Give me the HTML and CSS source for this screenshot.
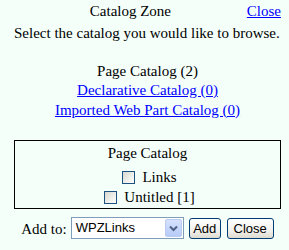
FILE: index.html
```html
<!DOCTYPE html>
<html lang="en">
<head>
    <meta charset="UTF-8">
    <title>Catalog Zone</title>
    <link rel="stylesheet" href="styles.css">
</head>
<body>
    <div class="zone">
        <div class="zone-header">
            <span class="zone-title">Catalog Zone</span>
            <a href="#" class="zone-close">Close</a>
        </div>
        <div class="instructions">Select the catalog you would like to browse.</div>

        <div class="catalogs">
            <div>Page Catalog (2)</div>
            <a href="#">Declarative Catalog (0)</a>
            <a href="#">Imported Web Part Catalog (0)</a>
        </div>

        <div class="part-box">
            <div class="part-title">Page Catalog</div>
            <label class="part-row"><span class="check"></span>Links</label>
            <label class="part-row"><span class="check"></span>Untitled [1]</label>
        </div>

        <div class="footer">
            <span class="add-label">Add to:</span>
            <div class="combo">
                <span class="combo-text">WPZLinks</span>
                <span class="combo-btn">
                    <svg width="9" height="7" viewBox="0 0 9 7">
                        <path d="M1 1.5 L4.5 5 L8 1.5" fill="none" stroke="#4d6185" stroke-width="2"/>
                    </svg>
                </span>
            </div>
            <button class="btn btn-add">Add</button>
            <button class="btn btn-close">Close</button>
        </div>
    </div>
</body>
</html>
```

FILE: styles.css
```css
body {
    margin: 0;
    background: #f5fffa;
    font-family: "Liberation Serif", "Times New Roman", serif;
    font-size: 15px;
    line-height: 19.5px;
    color: #000;
}

a {
    color: #0000ff;
}

.zone {
    margin-left: 14px;
    width: 267px;
    padding-top: 1.5px;
    white-space: nowrap;
}

.zone-header {
    display: flex;
}

.zone-title {
    flex: 1;
    text-align: center;
}

.instructions {
    margin-top: 3px;
}

.catalogs {
    margin-top: 18px;
    text-align: center;
}

.catalogs a {
    display: block;
}

.part-box {
    margin-top: 20px;
    border: 1px solid #000;
    padding: 3px 0 1px;
    text-align: center;
    width: 265px;
}

.part-title {
    margin-bottom: 4.5px;
}

.part-row {
    display: flex;
    justify-content: center;
    align-items: center;
    height: 19.5px;
}

.check {
    width: 11px;
    height: 11px;
    margin: 0 7px 0 4px;
    border: 1px solid #1c5180;
    background: linear-gradient(135deg, #d8d8d2, #f4f4f0 70%, #ffffff);
}

.footer {
    margin-top: 8px;
    display: flex;
    justify-content: center;
    align-items: flex-start;
}

.add-label {
    margin-top: 3px;
    margin-right: 4px;
}

.combo {
    display: flex;
    align-items: center;
    width: 111px;
    height: 20px;
    border: 1px solid #7f9db9;
    background: #fff;
    font-family: "Liberation Sans", Arial, sans-serif;
    font-size: 13px;
}

.combo-text {
    flex: 1;
    padding-left: 4px;
}

.combo-btn {
    display: flex;
    align-items: center;
    justify-content: center;
    width: 15px;
    height: 16px;
    margin-right: 1px;
    border: 1px solid #b9cbf3;
    border-radius: 2px;
    background: linear-gradient(#d6e2fc, #b7cbf7);
}

.btn {
    font-family: "Liberation Sans", Arial, sans-serif;
    font-size: 13px;
    height: 21px;
    padding: 0;
    margin-top: 1px;
    border: 1px solid #003c74;
    border-radius: 3px;
    background: linear-gradient(#ffffff, #f2f1ec 60%, #dedbd0);
    color: #000;
}

.btn-add {
    width: 32px;
    margin-left: 5px;
}

.btn-close {
    width: 47px;
    margin-left: 6px;
}
```
